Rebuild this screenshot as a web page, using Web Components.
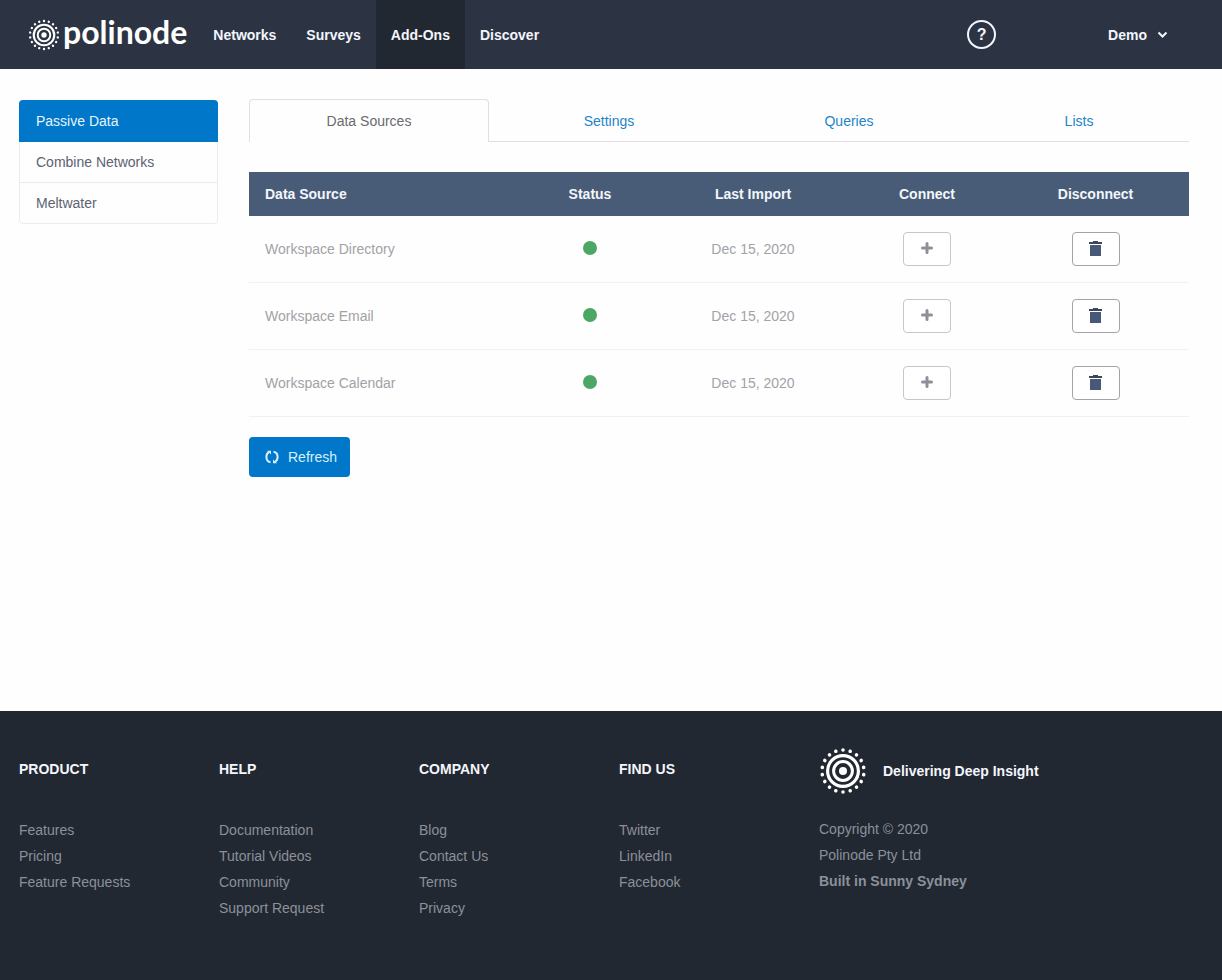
<!DOCTYPE html>
<html lang="en">
<head>
<meta charset="utf-8">
<title>Polinode - Passive Data</title>
<style>
  html { height: 100%; }
  body { margin: 0; min-height: 100%; background: #fefefe; font: 14px/20px "Liberation Sans", Arial, sans-serif; }
</style>
</head>
<body>
<polinode-app></polinode-app>

<script>
const define = (name, html, setup) => customElements.define(name, class extends HTMLElement {
  constructor() {
    super();
    this.attachShadow({ mode: 'open' });
  }
  connectedCallback() {
    const template = document.createElement('template');
    template.innerHTML = html;
    this.shadowRoot.replaceChildren(template.content.cloneNode(true));
    if (setup) setup(this, this.shadowRoot);
  }
});

/* Concentric ring emblem with a halo of 18 dots */
const halo = Array.from({ length: 18 }, (_, i) =>
  `<circle cx="24" cy="3" r="1.8" transform="rotate(${i * 20} 24 24)"/>`).join('');

define('ring-mark', `
  <style>
    :host { display: block; flex: none; width: 32px; height: 32px; color: #fff; }
    svg { display: block; width: 100%; height: 100%; }
  </style>
  <svg viewBox="0 0 48 48" fill="currentColor" aria-hidden="true">
    <g>${halo}</g>
    <circle cx="24" cy="24" r="15.4" fill="none" stroke="currentColor" stroke-width="3.2"/>
    <circle cx="24" cy="24" r="9.4" fill="none" stroke="currentColor" stroke-width="3"/>
    <circle cx="24" cy="24" r="4"/>
  </svg>`);

define('nav-item', `
  <style>
    :host { display: flex; }
    a { display: flex; align-items: center; padding: 0 15px; color: #f3f6fc; font-weight: 700; text-decoration: none; }
    :host([active]) a { background: #222831; }
  </style>
  <a href="#"><slot></slot></a>`, (host, root) => {
    if (host.hasAttribute('active')) root.querySelector('a').setAttribute('aria-current', 'page');
  });

define('app-header', `
  <style>
    :host { display: flex; align-items: stretch; height: 69px; padding: 0 54px 0 28px; background: #2c3444; color: #f3f6fc; }
    .brand { display: flex; align-items: center; gap: 3px; margin-right: 11px; color: #fff; text-decoration: none; }
    .word { font: 700 32px/38px Lato, sans-serif; padding-bottom: 5px; }
    nav { display: flex; }
    .tools { display: flex; align-items: center; gap: 112px; margin-left: auto; }
    button { font: inherit; font-weight: 700; color: inherit; background: none; border: 0; padding: 0; }
    .help { width: 29px; height: 29px; border: 2px solid; border-radius: 50%; font-size: 16px; line-height: 24px; }
    .user { display: flex; align-items: center; gap: 10px; }
  </style>
  <a class="brand" href="#"><ring-mark></ring-mark><span class="word">polinode</span></a>
  <nav aria-label="Main">
    <nav-item>Networks</nav-item>
    <nav-item>Surveys</nav-item>
    <nav-item active>Add-Ons</nav-item>
    <nav-item>Discover</nav-item>
  </nav>
  <div class="tools">
    <button class="help" type="button" title="Help">?</button>
    <button class="user" type="button">Demo
      <svg width="11" height="8" viewBox="0 0 11 8" fill="none" stroke="currentColor" stroke-width="2" aria-hidden="true"><path d="M1.500 1.500 5.500 5.500 9.500 1.500"/></svg>
    </button>
  </div>`);

define('side-menu', `
  <style>
    :host { display: block; }
    nav { display: flex; flex-direction: column; border: 1px solid #eceaf0; border-radius: 4px; }
  </style>
  <nav aria-label="Add-ons"><slot></slot></nav>`);

define('side-link', `
  <style>
    :host { display: block; }
    :host(:not(:last-child)) a { border-bottom: 1px solid #eceaf0; }
    a { display: block; padding: 10px 16px; color: #5c6372; text-decoration: none; }
    :host([active]) a { margin: -1px -1px 0; padding: 11px 17px 10px; background: #0077c8; border-color: #0077c8; border-radius: 4px 4px 0 0; color: #e4f5ff; }
  </style>
  <a href="#"><slot></slot></a>`);

define('tab-bar', `
  <style>
    :host { display: block; }
    nav { display: grid; grid-template-columns: 12fr 12fr 12fr 11fr; }
  </style>
  <nav aria-label="Passive data"><slot></slot></nav>`);

define('tab-link', `
  <style>
    :host { display: block; }
    a { display: block; padding: 11px 15px 10px; border: solid #e0dde4; border-width: 0 0 1px; margin-top: 1px; text-align: center; color: #1f84c6; text-decoration: none; }
    :host([active]) a { margin: 0; padding-bottom: 11px; border-width: 1px 1px 0; border-radius: 4px 4px 0 0; color: #6a6a70; }
  </style>
  <a href="#"><slot></slot></a>`);

define('status-dot', `
  <style>
    :host { display: block; width: 14px; height: 14px; margin: 0 auto 2px; border-radius: 50%; background: #4da764; }
  </style>`);

const icons = {
  plus: '<path d="M7 2.500V11.500M2.500 7H11.500" stroke="#8d9099" stroke-width="3" stroke-linecap="round"/>',
  trash: '<path d="M5 0h5v1h4v2H1V1h4z" fill="#3d4558"/><path d="M2 4h11v11H2z" fill="#475878"/>'
};

define('icon-button', `
  <style>
    :host { display: inline-block; vertical-align: middle; }
    button { display: flex; align-items: center; justify-content: center; width: 48px; height: 34px; padding: 0 0 2px; border: 1px solid #a3a3aa; border-radius: 4px; background: #fff; }
    button:disabled { border-color: #c6c6cc; }
  </style>
  <button type="button"></button>`, (host, root) => {
    const button = root.querySelector('button');
    const icon = host.getAttribute('icon');
    const size = icon === 'plus' ? 14 : 15;
    button.disabled = host.hasAttribute('disabled');
    button.setAttribute('aria-label', host.getAttribute('label'));
    button.innerHTML = `<svg width="${size}" height="${size}" viewBox="0 0 ${size} ${size}" aria-hidden="true">${icons[icon]}</svg>`;
  });

const rows = ['Directory', 'Email', 'Calendar'].map(name => `
  <tr>
    <td>Workspace ${name}</td>
    <td><status-dot role="img" aria-label="Connected"></status-dot></td>
    <td>Dec 15, 2020</td>
    <td><icon-button icon="plus" label="Connect Workspace ${name}" disabled></icon-button></td>
    <td><icon-button icon="trash" label="Disconnect Workspace ${name}"></icon-button></td>
  </tr>`).join('');

define('source-table', `
  <style>
    :host { display: block; }
    table { width: 100%; border-collapse: separate; border-spacing: 0; table-layout: fixed; }
    th, td { padding: 0; text-align: center; }
    th:first-child, td:first-child { padding-left: 16px; text-align: left; }
    th { height: 44px; background: #495c77; color: #f3f6fc; }
    td { height: 66px; border-bottom: 1px solid #f1f0f4; color: #a2a2a7; }
    .status { width: 128px; }
    .date { width: 198px; }
    .connect { width: 150px; }
    .disconnect { width: 187px; }
  </style>
  <table>
    <thead><tr>
      <th scope="col">Data Source</th>
      <th scope="col" class="status">Status</th>
      <th scope="col" class="date">Last Import</th>
      <th scope="col" class="connect">Connect</th>
      <th scope="col" class="disconnect">Disconnect</th>
    </tr></thead>
    <tbody>${rows}</tbody>
  </table>`);

define('refresh-button', `
  <style>
    :host { display: block; }
    button { display: flex; align-items: center; gap: 9px; height: 40px; padding: 0 13px 0 16px; border: 0; border-radius: 4px; background: #0077c8; color: #d6f0ff; font: inherit; }
  </style>
  <button type="button">
    <svg width="14" height="14" viewBox="0 0 14 14" aria-hidden="true">
      <path d="M5.500 12.300C2.500 11.800 1.400 9.500 1.400 7 1.400 5 2.200 3.200 3.800 2.200M8.500 1.700C11.500 2.200 12.600 4.500 12.600 7 12.600 9 11.800 10.800 10.200 11.800" fill="none" stroke="currentColor" stroke-width="2"/>
      <path d="M2 .8H6V4.600zM12 13.200H8V9.400z" fill="currentColor"/>
    </svg>
    <slot></slot>
  </button>`);

define('footer-column', `
  <style>
    :host { display: block; padding-top: 9px; line-height: 26px; }
    h2 { margin: 0 0 35px; font-size: 14px; line-height: 26px; color: #f3f6fc; }
    ul { margin: 0; padding: 0; list-style: none; }
    a { color: #8b909b; text-decoration: none; }
  </style>
  <h2></h2><ul></ul>`, (host, root) => {
    root.querySelector('h2').textContent = host.getAttribute('heading');
    root.querySelector('ul').innerHTML = host.getAttribute('links').split('|')
      .map(text => `<li><a href="#">${text}</a></li>`).join('');
  });

define('app-footer', `
  <style>
    :host { display: grid; grid-template-columns: repeat(4, minmax(0, 200px)) 1fr; padding: 36px 19px 59px; background: #222831; }
    .brand { display: flex; align-items: center; gap: 16px; margin-bottom: 21px; color: #f3f6fc; font-weight: 700; }
    ring-mark { width: 48px; height: 48px; }
    p { margin: 0; line-height: 26px; color: #8b909b; }
  </style>
  <footer-column heading="PRODUCT" links="Features|Pricing|Feature Requests"></footer-column>
  <footer-column heading="HELP" links="Documentation|Tutorial Videos|Community|Support Request"></footer-column>
  <footer-column heading="COMPANY" links="Blog|Contact Us|Terms|Privacy"></footer-column>
  <footer-column heading="FIND US" links="Twitter|LinkedIn|Facebook"></footer-column>
  <div>
    <div class="brand"><ring-mark></ring-mark><span>Delivering Deep Insight</span></div>
    <p>Copyright © 2020</p>
    <p>Polinode Pty Ltd</p>
    <p><strong>Built in Sunny Sydney</strong></p>
  </div>`);

define('polinode-app', `
  <style>
    :host { display: flex; flex-direction: column; min-height: 100vh; }
    main { flex: 1; display: grid; grid-template-columns: 199px minmax(0, 1fr); gap: 31px; align-items: start; padding: 30px 33px 60px 19px; }
    side-menu { margin-top: 1px; }
    source-table { margin: 30px 0 20px; }
  </style>
  <app-header role="banner"></app-header>
  <main>
    <side-menu>
      <side-link active>Passive Data</side-link>
      <side-link>Combine Networks</side-link>
      <side-link>Meltwater</side-link>
    </side-menu>
    <section>
      <tab-bar>
        <tab-link active>Data Sources</tab-link>
        <tab-link>Settings</tab-link>
        <tab-link>Queries</tab-link>
        <tab-link>Lists</tab-link>
      </tab-bar>
      <source-table></source-table>
      <refresh-button>Refresh</refresh-button>
    </section>
  </main>
  <app-footer role="contentinfo"></app-footer>`);
</script>
</body>
</html>
